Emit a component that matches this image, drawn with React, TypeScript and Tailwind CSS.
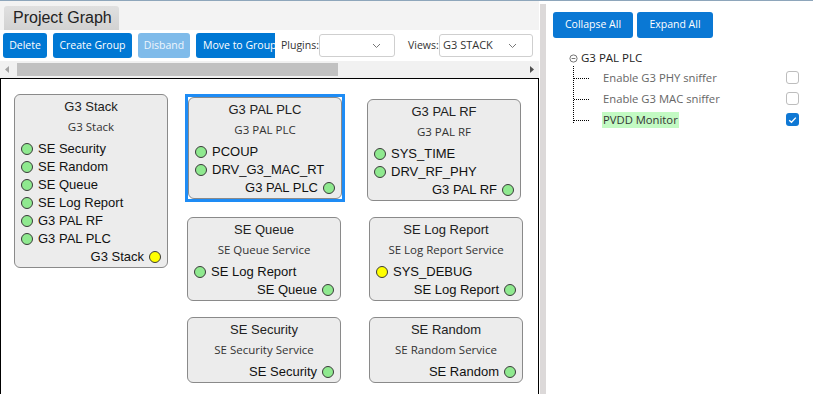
import React from "react";

const ARIAL = "font-['Liberation_Sans',Arial,sans-serif]";
const SEGOE = "font-['Open_Sans',sans-serif]";

function Dot({ yellow }: { yellow?: boolean }) {
  return (
    <span
      className={`inline-block h-[12px] w-[12px] shrink-0 rounded-full border border-[#3a3a3a] ${
        yellow ? "bg-[#ffff00]" : "bg-[#8fe98f]"
      }`}
    />
  );
}

type NodeProps = {
  title: string;
  sub: string;
  inputs: { label: string; yellow?: boolean }[];
  output: string;
  outYellow?: boolean;
  className?: string;
};

function Node({ title, sub, inputs, output, outYellow, className }: NodeProps) {
  return (
    <div
      className={`w-[154px] rounded-[6px] border border-[#8a8a8a] bg-[#ececec] px-[6px] pt-[3px] pb-[1px] ${className ?? ""}`}
    >
      <div className={`h-[17px] text-center text-[13px] leading-[17px] text-[#222] ${ARIAL}`}>{title}</div>
      <div className={`mt-[3px] h-[18px] text-center text-[11.5px] leading-[18px] text-[#333] ${SEGOE}`}>{sub}</div>
      <div className={`mt-[4px] text-[13px] text-[#111] ${ARIAL}`}>
        {inputs.map((i) => (
          <div key={i.label} className="flex h-[18px] items-center gap-[5px] whitespace-nowrap">
            <Dot yellow={i.yellow} />
            <span className="leading-[18px]">{i.label}</span>
          </div>
        ))}
        <div className="flex h-[18px] items-center justify-end gap-[5px] whitespace-nowrap">
          <span className="leading-[18px]">{output}</span>
          <Dot yellow={outYellow} />
        </div>
      </div>
    </div>
  );
}

function Chevron() {
  return (
    <svg width="9" height="6" viewBox="0 0 9 6" className="shrink-0">
      <path d="M1 1 L4.5 4.5 L8 1" fill="none" stroke="#777" strokeWidth="1" />
    </svg>
  );
}

function Checkbox({ checked }: { checked?: boolean }) {
  if (checked) {
    return (
      <span className="flex h-[13px] w-[13px] items-center justify-center rounded-[3px] bg-[#0f78d4]">
        <svg width="9" height="8" viewBox="0 0 9 8">
          <path d="M1.2 4.2 L3.5 6.3 L7.8 1.6" fill="none" stroke="#fff" strokeWidth="1.4" />
        </svg>
      </span>
    );
  }
  return <span className="block h-[13px] w-[13px] rounded-[3px] border border-[#bdbdbd] bg-white" />;
}

export default function App() {
  return (
    <div className={`h-[394px] w-[813px] overflow-hidden bg-white ${SEGOE}`}>
      <div className="h-[1px] w-full bg-[#8ea6bb]" />
      <div className="flex h-[393px]">
        {/* Left panel */}
        <div className="flex w-[539px] flex-col">
          <div className="h-[29px] bg-[#f3f3f3] pl-[4px] pt-[5px]">
            <div
              className={`flex h-[24px] w-[115px] items-center rounded-t-[3px] bg-gradient-to-b from-[#e0e0e0] to-[#d2d2d2] pl-[9px] text-[16px] text-[#222] ${ARIAL}`}
            >
              Project Graph
            </div>
          </div>
          <div className="flex h-[31px] items-center bg-white pl-[3px] text-[10.5px]">
            <div className="flex h-[25px] w-[44px] items-center justify-center rounded-[3px] bg-[#0078d4] text-white">
              Delete
            </div>
            <div className="ml-[6px] flex h-[25px] w-[79px] items-center justify-center rounded-[3px] bg-[#0078d4] text-white">
              Create Group
            </div>
            <div className="ml-[6px] flex h-[25px] w-[52px] items-center justify-center rounded-[3px] bg-[#7fbbea] text-[#eef6fd]">
              Disband
            </div>
            <div className="ml-[6px] flex h-[25px] w-[79px] items-center overflow-hidden whitespace-nowrap rounded-l-[3px] bg-[#0078d4] pl-[7px] text-white">
              Move to Group
            </div>
            <span className="ml-[6px] w-[38px] whitespace-nowrap text-[10.5px] text-[#333]">Plugins:</span>
            <div className="flex h-[23px] w-[76px] items-center justify-end rounded-[3px] border border-[#cfcfcf] bg-white pr-[13px]">
              <Chevron />
            </div>
            <span className="ml-[13px] w-[31px] whitespace-nowrap text-[10.5px] text-[#333]">Views:</span>
            <div className="flex h-[23px] w-[94px] items-center justify-between rounded-[3px] border border-[#cfcfcf] bg-white pl-[3px] pr-[15px] text-[11px] text-[#333]">
              <span>G3 STACK</span>
              <Chevron />
            </div>
          </div>
          <div className="flex h-[17px] items-center bg-[#f1f1f1]">
            <svg width="17" height="17" viewBox="0 0 17 17" className="shrink-0">
              <path d="M5 8.5 L9 5 L9 12 Z" fill="#a3a3a3" />
            </svg>
            <div className="h-[13px] w-[321px] bg-[#c1c1c1]" />
            <div className="flex-1" />
            <svg width="17" height="17" viewBox="0 0 17 17" className="shrink-0">
              <path d="M12 8.5 L8 5 L8 12 Z" fill="#505050" />
            </svg>
          </div>
          <div className="relative flex-1 border-l border-r border-t border-black bg-white">
            <Node
              className="absolute left-[13px] top-[15px]"
              title="G3 Stack"
              sub="G3 Stack"
              inputs={[
                { label: "SE Security" },
                { label: "SE Random" },
                { label: "SE Queue" },
                { label: "SE Log Report" },
                { label: "G3 PAL RF" },
                { label: "G3 PAL PLC" },
              ]}
              output="G3 Stack"
              outYellow
            />
            <div className="absolute left-[184px] top-[15px] border-[3px] border-[#1e8cf5] bg-white">
              <Node
                title="G3 PAL PLC"
                sub="G3 PAL PLC"
                inputs={[{ label: "PCOUP" }, { label: "DRV_G3_MAC_RT" }]}
                output="G3 PAL PLC"
              />
            </div>
            <Node
              className="absolute left-[366px] top-[20px]"
              title="G3 PAL RF"
              sub="G3 PAL RF"
              inputs={[{ label: "SYS_TIME" }, { label: "DRV_RF_PHY" }]}
              output="G3 PAL RF"
            />
            <Node
              className="absolute left-[186px] top-[138px]"
              title="SE Queue"
              sub="SE Queue Service"
              inputs={[{ label: "SE Log Report" }]}
              output="SE Queue"
            />
            <Node
              className="absolute left-[368px] top-[138px]"
              title="SE Log Report"
              sub="SE Log Report Service"
              inputs={[{ label: "SYS_DEBUG", yellow: true }]}
              output="SE Log Report"
            />
            <Node
              className="absolute left-[186px] top-[238px]"
              title="SE Security"
              sub="SE Security Service"
              inputs={[]}
              output="SE Security"
            />
            <Node
              className="absolute left-[368px] top-[238px]"
              title="SE Random"
              sub="SE Random Service"
              inputs={[]}
              output="SE Random"
            />
          </div>
        </div>
        {/* Splitter */}
        <div className="ml-[1px] mt-[3px] w-[6px] bg-[#dcd9d9]" />
        {/* Right panel */}
        <div className="flex-1 bg-white pl-[7px] pt-[11px]">
          <div className="flex gap-[4px] text-[10.5px] text-white">
            <div className="flex h-[26px] w-[80px] items-center justify-center rounded-[3px] bg-[#0a78d4]">
              Collapse All
            </div>
            <div className="flex h-[26px] w-[76px] items-center justify-center rounded-[3px] bg-[#0a78d4]">
              Expand All
            </div>
          </div>
          <div className="relative mt-[11px] pl-[16px]">
            <div className="flex h-[18px] items-center">
              <svg width="9" height="9" viewBox="0 0 9 9" className="mr-[3px] shrink-0">
                <circle cx="4.5" cy="4.5" r="3.6" fill="none" stroke="#666" strokeWidth="0.9" />
                <path d="M2.6 4.5 H6.4" stroke="#666" strokeWidth="0.9" />
              </svg>
              <span className="text-[11.5px] text-[#222]">G3 PAL PLC</span>
            </div>
            <div className="absolute left-[20px] top-[17px] h-[57px] border-l border-dotted border-black" />
            {[
              { label: "Enable G3 PHY sniffer", checked: false, hl: false },
              { label: "Enable G3 MAC sniffer", checked: false, hl: false },
              { label: "PVDD Monitor", checked: true, hl: true },
            ].map((r) => (
              <div key={r.label} className="relative flex h-[21px] items-center">
                <div className="absolute left-[5px] top-[11px] w-[15px] border-t border-dotted border-black" />
                <span
                  className={`ml-[33px] px-[1px] text-[11.25px] leading-[16px] ${
                    r.hl ? "bg-[#c3fac3] text-[#333]" : "text-[#666]"
                  }`}
                >
                  {r.label}
                </span>
                <span className="absolute left-[217px] top-[4px]">
                  <Checkbox checked={r.checked} />
                </span>
              </div>
            ))}
          </div>
        </div>
      </div>
    </div>
  );
}
